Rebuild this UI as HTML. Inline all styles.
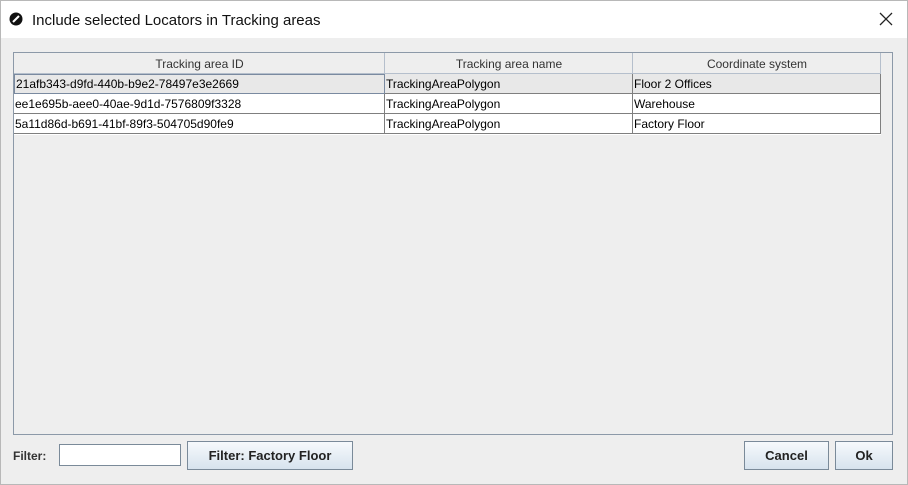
<!DOCTYPE html><html><head><style>
body{margin:0;width:908px;height:485px;background:#eeeeee;font-family:"Liberation Sans",sans-serif;position:relative;overflow:hidden}
.a{position:absolute}
#win{left:0;top:0;width:906px;height:483px;border:1px solid #b8b8b8}
#title{left:1px;top:1px;width:906px;height:37px;background:#fff}
.btn{border:1px solid #7a8a99;background:linear-gradient(#f6f9fc,#d7e3ee);font-weight:bold;font-size:13px;color:#222;display:flex;align-items:center;justify-content:center;box-sizing:border-box}
.cell{position:absolute;height:20px;line-height:21px;font-size:12px;padding-left:1px;box-sizing:border-box;border-right:1px solid #7f7f7f;border-bottom:1px solid #7f7f7f;overflow:hidden}
.h{background:#eeeeee;text-align:center;color:#333;border-right:1px solid #b5bfcc;border-bottom:1px solid #b5bfcc;line-height:22px}
</style></head><body>
<div class="a" id="win"></div>
<div class="a" id="title"></div>
<svg class="a" style="left:9px;top:12px" width="14" height="14" viewBox="0 0 14 14"><circle cx="7" cy="7" r="6.5" fill="#111"/><path d="M4 10 L10 4" stroke="#fff" stroke-width="2"/></svg>
<div class="a" style="left:32px;top:12px;font-size:15px;color:#111">Include selected Locators in Tracking areas</div>
<svg class="a" style="left:879px;top:12px" width="14" height="14"><path d="M1 1L13 13M13 1L1 13" stroke="#222" stroke-width="1.3"/></svg>
<div class="a" style="left:13px;top:52px;width:878px;height:381px;border:1px solid #8c99a8"></div>
<div class="cell h" style="left:14px;top:53px;width:371px;height:21px">Tracking area ID</div>
<div class="cell h" style="left:385px;top:53px;width:248px;height:21px">Tracking area name</div>
<div class="cell h" style="left:633px;top:53px;width:248px;height:21px">Coordinate system</div>
<div class="a" style="left:14px;top:74px;width:867px;height:61px;background:#fff"></div>
<div class="a" style="left:14px;top:74px;width:867px;height:20px;background:#e8e8e8"></div>
<div class="cell" style="left:14px;top:74px;width:371px;border:1px solid #7a8aa0;line-height:19px">21afb343-d9fd-440b-b9e2-78497e3e2669</div>
<div class="cell" style="left:385px;top:74px;width:248px">TrackingAreaPolygon</div>
<div class="cell" style="left:633px;top:74px;width:248px">Floor 2 Offices</div>
<div class="cell" style="left:14px;top:94px;width:371px">ee1e695b-aee0-40ae-9d1d-7576809f3328</div>
<div class="cell" style="left:385px;top:94px;width:248px">TrackingAreaPolygon</div>
<div class="cell" style="left:633px;top:94px;width:248px">Warehouse</div>
<div class="cell" style="left:14px;top:114px;width:371px">5a11d86d-b691-41bf-89f3-504705d90fe9</div>
<div class="cell" style="left:385px;top:114px;width:248px">TrackingAreaPolygon</div>
<div class="cell" style="left:633px;top:114px;width:248px">Factory Floor</div>
<div class="a" style="left:13px;top:449px;font-size:12px;font-weight:bold;color:#333">Filter:</div>
<div class="a" style="left:59px;top:444px;width:120px;height:20px;border:1px solid #7a8a99;background:#fff"></div>
<div class="a btn" style="left:187px;top:441px;width:166px;height:29px">Filter: Factory Floor</div>
<div class="a btn" style="left:744px;top:441px;width:85px;height:29px">Cancel</div>
<div class="a btn" style="left:835px;top:441px;width:58px;height:29px">Ok</div>
</body></html>
